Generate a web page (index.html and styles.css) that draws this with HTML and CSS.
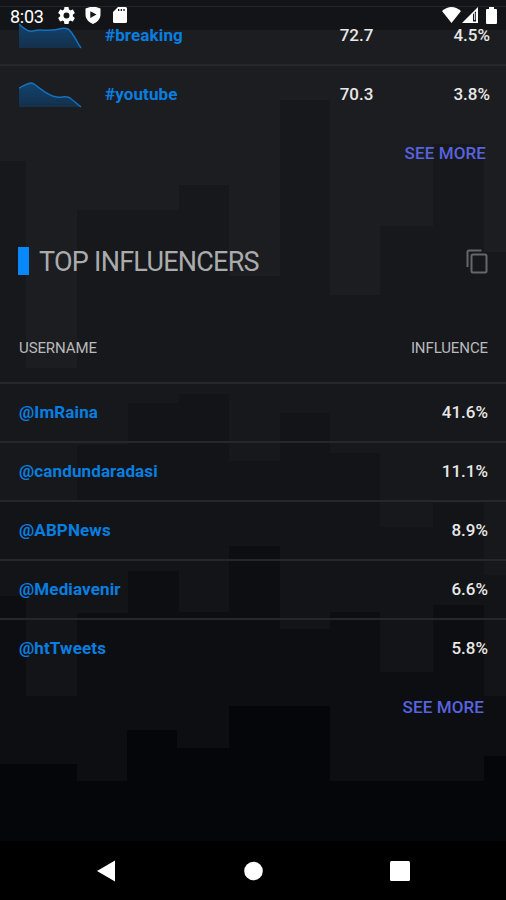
FILE: index.html
```
<!DOCTYPE html>
<html lang="en">
<head>
<meta charset="utf-8">
<title>Top Influencers</title>
<link rel="stylesheet" href="styles.css">
</head>
<body>
<div class="screen">
  <svg class="skyline" viewBox="0 0 506 842" aria-hidden="true">
    <path fill="#17181b" d="M0 842V161H26V368H77V210H179V185H229V276H280V100H330V295H380V226H433V144H484V252H506V842z"/>
    <path fill="#131417" d="M0 842V501H77V445H128V403H179V394H229V461H280V413H330V453H380V527H433V503H484V575H506V842z"/>
    <path fill="#0d0e11" d="M0 842V596H26V696H77V613H128V571H179V612H229V546H280V629H330V612H380V672H433V605H484V696H506V842z"/>
    <path fill="#05060a" d="M0 842V764H77V781H127V730H177V748H229V706H330V781H484V756H506V842z"/>
  </svg>
  <header class="status">
    <span class="clock">8:03</span>
    <svg class="gear" viewBox="2 2 20 20"><path fill="#fff" d="M19.43 12.98c.04-.32.07-.64.07-.98s-.03-.66-.07-.98l2.11-1.65c.19-.15.24-.42.12-.64l-2-3.46c-.12-.22-.39-.3-.61-.22l-2.49 1c-.52-.4-1.08-.73-1.69-.98l-.38-2.65A.49.49 0 0 0 14 2h-4c-.25 0-.46.18-.49.42l-.38 2.65c-.61.25-1.17.59-1.69.98l-2.49-1c-.23-.09-.49 0-.61.22l-2 3.46c-.13.22-.07.49.12.64l2.11 1.65c-.04.32-.07.65-.07.98s.03.66.07.98l-2.11 1.65c-.19.15-.24.42-.12.64l2 3.46c.12.22.39.3.61.22l2.49-1c.52.4 1.08.73 1.69.98l.38 2.65c.03.24.24.42.49.42h4c.25 0 .46-.18.49-.42l.38-2.65c.61-.25 1.17-.59 1.69-.98l2.49 1c.23.09.49 0 .61-.22l2-3.46c.12-.22.07-.49-.12-.64zM12 15.5a3.5 3.5 0 1 1 0-7 3.5 3.5 0 0 1 0 7z"/></svg>
    <svg class="shield" viewBox="0 0 16 18"><path fill="#fff" fill-rule="evenodd" d="M8 0L15.500 2.600V8.500C15.500 13 12 16.500 8 18C4 16.500.5 13 .5 8.500V2.600zM5.300 5.200V12L11.500 8.600z"/></svg>
    <svg class="card" viewBox="0 0 14 16"><path fill="#fff" fill-rule="evenodd" d="M5 0H12.500Q14 0 14 1.500V14.500Q14 16 12.500 16H1.500Q0 16 0 14.500V5zM5 2V4H6.300V2zM7.700 2V4H9V2zM10.400 2V4H11.700V2z"/></svg>
    <span class="spacer"></span>
    <svg class="wifi" viewBox="0 0 19 16"><path fill="#fff" d="M0 4Q9.500-4 19 4L9.500 16z"/></svg>
    <svg class="signal" viewBox="0 0 16 16"><path fill="#fff" fill-rule="evenodd" d="M0 16L16 0V16zM11 7.200V14.500H14V4.200z"/><path fill="#fff" d="M12.200 6H13.200V13H12.200z"/></svg>
    <svg class="battery" viewBox="0 0 11 17"><path fill="#fff" d="M3 0H8V2H10Q11 2 11 3V16Q11 17 10 17H1Q0 17 0 16V3Q0 2 1 2H3z"/></svg>
  </header>
  <main>
    <section class="hashtags">
      <div class="row tag-row">
        <svg class="spark" viewBox="0 0 63 28"><defs><linearGradient id="fade" x2="0" y2="1"><stop stop-color="#12436f"/><stop offset="1" stop-color="#14304b"/></linearGradient></defs><path fill="url(#fade)" d="M0 3C6 8 9 11 14 10C22 8 25 10 32 9C39 10 43 5 49 8C54 11 58 22 62 27H0z"/><path class="trace" d="M0 3C6 8 9 11 14 10C22 8 25 10 32 9C39 10 43 5 49 8C54 11 58 22 62 27"/></svg>
        <a class="link">#breaking</a><b class="score">72.7</b><b class="rate">4.5%</b>
      </div>
      <div class="row tag-row">
        <svg class="spark" viewBox="0 0 63 28"><path fill="url(#fade)" d="M0 8C5 6 10 1 15 4C22 9 29 16 38 17C43 18 46 15 51 18C55 21 58 24 62 27H0z"/><path class="trace" d="M0 8C5 6 10 1 15 4C22 9 29 16 38 17C43 18 46 15 51 18C55 21 58 24 62 27"/></svg>
        <a class="link">#youtube</a><b class="score">70.3</b><b class="rate">3.8%</b>
      </div>
      <div class="more"><a>SEE MORE</a></div>
    </section>
    <section class="influencers">
      <div class="title">
        <span class="mark"></span><h2>TOP INFLUENCERS</h2>
        <svg class="copy" viewBox="0 0 22 25"><path d="M1.500 18V3Q1.500 1.500 3 1.500H15.500"/><rect x="5.500" y="5.500" width="15" height="18" rx="1.500"/></svg>
      </div>
      <div class="row heads"><span>USERNAME</span><span>INFLUENCE</span></div>
      <div class="row"><a class="link">@ImRaina</a><b>41.6%</b></div>
      <div class="row"><a class="link">@candundaradasi</a><b>11.1%</b></div>
      <div class="row"><a class="link">@ABPNews</a><b>8.9%</b></div>
      <div class="row"><a class="link">@Mediavenir</a><b>6.6%</b></div>
      <div class="row"><a class="link">@htTweets</a><b>5.8%</b></div>
      <div class="more last"><a>SEE MORE</a></div>
    </section>
  </main>
  <nav>
    <svg viewBox="0 0 20 22"><path d="M1 11L19 .5V21.500z"/></svg>
    <svg viewBox="0 0 20 22"><circle cx="10.500" cy="11" r="9.300"/></svg>
    <svg viewBox="0 0 20 22"><rect y="1" width="20" height="20" rx="1.500"/></svg>
  </nav>
</div>
</body>
</html>
```
FILE: styles.css
```
* { box-sizing: border-box; }
body { margin: 0; background: #000; }
.screen {
  position: relative;
  display: flex;
  flex-direction: column;
  width: 506px;
  height: 900px;
  overflow: hidden;
  background: #1c1d20;
  color: #e8e8e8;
  font-family: Roboto, sans-serif;
  font-size: 17px;
}
.skyline { position: absolute; top: 0; left: 0; width: 506px; height: 842px; }
.status {
  position: absolute;
  top: 0;
  left: 0;
  display: flex;
  align-items: center;
  width: 506px;
  height: 30px;
  padding: 0 9px 0 10px;
  background: rgba(12, 13, 16, .55);
}
.clock { width: 48px; padding-top: 2px; color: #fff; font-size: 18px; letter-spacing: -.3px; }
.status svg { flex: none; }
.gear { width: 17px; height: 17px; }
.shield { width: 16px; height: 18px; margin-left: 10px; }
.card { width: 14px; height: 16px; margin-left: 12px; }
.spacer { flex: 1; }
.wifi { width: 19px; height: 16px; }
.signal { width: 16px; height: 16px; margin-left: 1px; }
.battery { width: 11px; height: 17px; margin-left: 8px; }
main { position: relative; flex: 1; padding-top: 6px; }
.hashtags { border-top: 1px solid #232528; }
.row {
  display: flex;
  align-items: center;
  justify-content: space-between;
  height: 59px;
  padding: 0 18px 2px 19px;
  border-bottom: 2px solid #25272a;
}
.row b { font-weight: 500; }
.link { color: #087fe0; font-weight: 700; letter-spacing: .12px; }
.tag-row { padding-right: 16px; }
.tag-row:nth-child(2) { border-color: transparent; }
.spark { width: 63px; height: 28px; margin: 0 23px 0 0; }
.trace { fill: none; stroke: #1371bd; stroke-width: 1.5; }
.tag-row .link { flex: 1; }
.score { margin-right: 80px; }
.more { display: flex; justify-content: flex-end; align-items: center; height: 57px; padding: 0 20px 2px 0; color: #5763df; font-weight: 500; letter-spacing: .1px; }
.last { padding-right: 22px; }
.influencers { padding-top: 59px; }
.title { display: flex; align-items: center; height: 40px; padding: 0 18px; }
.mark { width: 11px; height: 28px; background: #0788fa; }
h2 { flex: 1; margin: 2px 0 0 10px; color: #aaabad; font-size: 27px; font-weight: 400; line-height: 32px; letter-spacing: -.75px; }
.copy { width: 22px; height: 25px; fill: none; stroke: #65666a; stroke-width: 2; }
.heads { height: 103px; padding-top: 34px; color: #b9babc; font-size: 15px; letter-spacing: -.1px; }
.row:nth-last-child(2) { border-color: transparent; }
nav { position: relative; display: flex; height: 59px; padding: 0 96px; align-items: center; justify-content: space-between; background: #000; }
nav svg { width: 20px; height: 22px; fill: #fff; }
```
